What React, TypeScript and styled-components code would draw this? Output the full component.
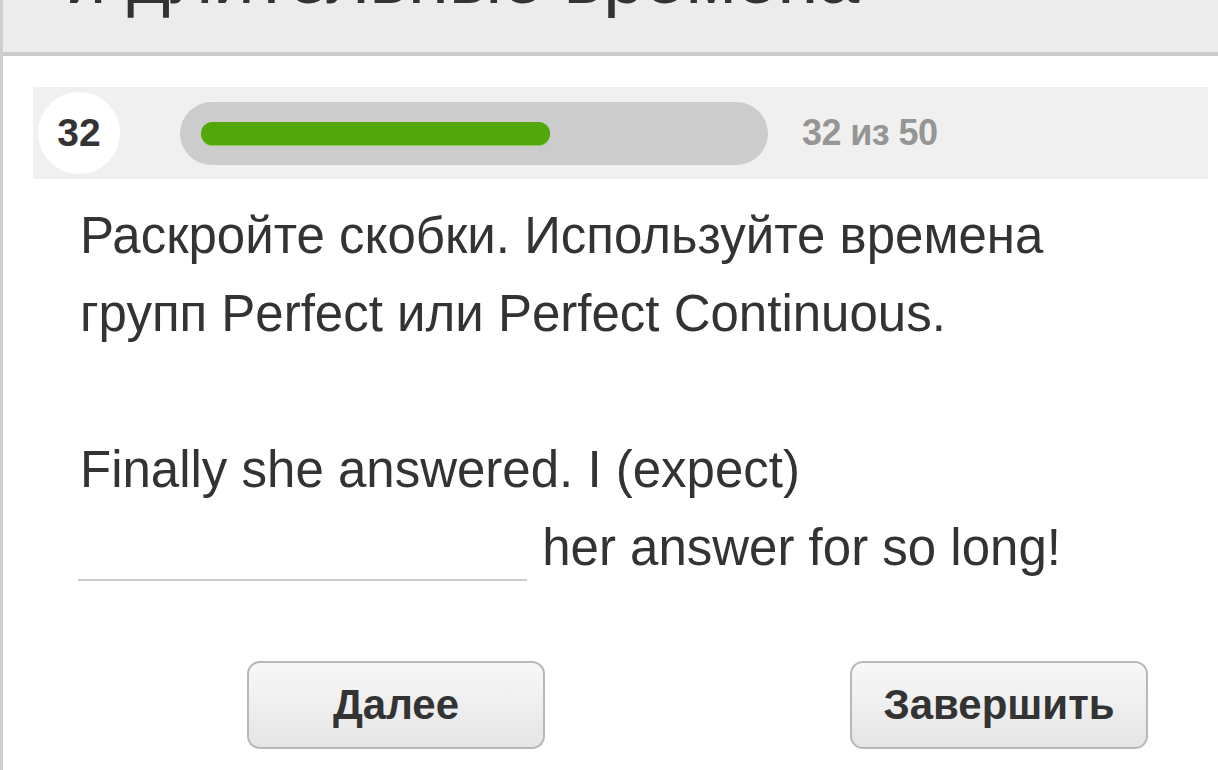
import React from "react";
import styled, { createGlobalStyle } from "styled-components";

const Global = createGlobalStyle`
  html, body { margin: 0; padding: 0; background: #ffffff; }
  body { font-family: "Liberation Sans", Arial, Helvetica, sans-serif; color: #333333; }
`;

const Page = styled.div`
  min-height: 770px;
  border-left: 3px solid #cfcfcf;
  background: #ffffff;
  overflow: hidden;
`;

const Header = styled.header`
  height: 52px;
  background: #ececec;
  border-bottom: 4px solid #cacaca;
  overflow: hidden;
  padding-left: 62px;
`;

const Title = styled.h1`
  margin: -62px 0 0 0;
  font-size: 74px;
  line-height: 80px;
  font-weight: normal;
  color: #333333;
  white-space: nowrap;
`;

const Progress = styled.div`
  margin: 31px 10px 0 30px;
  height: 92px;
  background: #f0f0f0;
  display: flex;
  align-items: center;
  padding-left: 5px;
`;

const Counter = styled.div`
  width: 82px;
  height: 82px;
  border-radius: 50%;
  background: #ffffff;
  display: flex;
  align-items: center;
  justify-content: center;
  font-weight: bold;
  font-size: 39px;
  color: #333333;
  flex-shrink: 0;
`;

const Track = styled.div`
  margin-left: 60px;
  width: 588px;
  height: 63px;
  border-radius: 32px;
  background: #cccccc;
  display: flex;
  align-items: center;
  padding: 0 21px;
  box-sizing: border-box;
`;

const Fill = styled.div`
  height: 23px;
  border-radius: 12px;
  background: #52a70b;
  box-shadow: 0 1px 0 #8fca5a;
`;

const Count = styled.div`
  margin-left: 34px;
  font-weight: bold;
  font-size: 36px;
  color: #959595;
  letter-spacing: -0.6px;
`;

const Question = styled.div`
  margin: 18px 0 0 77px;
  width: 1020px;
  font-size: 51px;
  line-height: 78px;
  color: #333333;
`;

const Paragraph = styled.p`
  margin: 0;
`;

const Spacer = styled.div`
  height: 78px;
`;

const Blank = styled.span`
  display: inline-block;
  width: 449px;
  height: 10px;
  margin-left: -2px;
  margin-right: 1px;
  border-bottom: 2px solid #cccccc;
  vertical-align: -16px;
`;

const Actions = styled.div`
  display: flex;
  gap: 305px;
  padding-left: 244px;
  margin-top: 74px;
`;

const Button = styled.button`
  width: 298px;
  height: 88px;
  border: 2px solid #b8b8b8;
  border-radius: 13px;
  background: linear-gradient(#f8f8f8, #e5e5e5);
  font-family: "Liberation Sans", Arial, sans-serif;
  font-weight: bold;
  font-size: 42px;
  color: #333333;
  padding: 0;
  cursor: pointer;
`;

export default function App() {
  const current = 32;
  const total = 50;
  return (
    <>
      <Global />
      <Page>
        <Header>
          <Title>и длительные времена</Title>
        </Header>
        <Progress>
          <Counter>{current}</Counter>
          <Track>
            <Fill style={{ width: `${(349 / 546) * 100}%` }} />
          </Track>
          <Count>
            {current} из {total}
          </Count>
        </Progress>
        <Question>
          <Paragraph>
            Раскройте скобки. Используйте времена групп Perfect или Perfect Continuous.
          </Paragraph>
          <Spacer />
          <Paragraph>
            Finally she answered. I (expect) <Blank /> her answer for so long!
          </Paragraph>
        </Question>
        <Actions>
          <Button>Далее</Button>
          <Button>Завершить</Button>
        </Actions>
      </Page>
    </>
  );
}
